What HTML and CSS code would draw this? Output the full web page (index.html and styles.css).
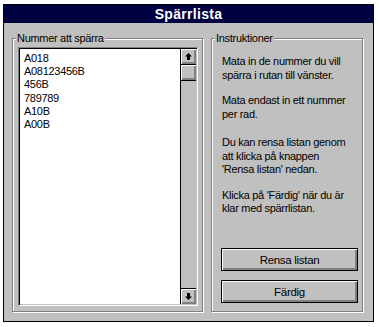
FILE: index.html
```html
<!DOCTYPE html>
<html lang="sv">
<head>
<meta charset="utf-8">
<title>Spärrlista</title>
<link rel="stylesheet" href="styles.css">
</head>
<body>
<div class="window">
  <div class="titlebar">Spärrlista</div>
  <div class="client">
    <div class="group group-list">
      <span class="legend">Nummer att spärra</span>
      <div class="listbox">
        <ul class="items">
          <li>A018</li>
          <li>A08123456B</li>
          <li>456B</li>
          <li>789789</li>
          <li>A10B</li>
          <li>A00B</li>
        </ul>
        <div class="scrollbar">
          <div class="sb-btn"><svg width="7" height="7" viewBox="0 0 7 7"><polygon points="3.5,0 7,3.5 5,3.5 5,7 2,7 2,3.5 0,3.5" fill="#000"/></svg></div>
          <div class="sb-thumb"></div>
          <div class="sb-track"></div>
          <div class="sb-btn sb-btn-down"><svg width="7" height="7" viewBox="0 0 7 7"><polygon points="3.5,7 7,3.5 5,3.5 5,0 2,0 2,3.5 0,3.5" fill="#000"/></svg></div>
        </div>
      </div>
    </div>
    <div class="group group-info">
      <span class="legend">Instruktioner</span>
      <p class="para">Mata in de nummer du vill<br>spärra i rutan till vänster.</p>
      <p class="para para-2">Mata endast in ett nummer<br>per rad.</p>
      <p class="para para-3">Du kan rensa listan genom<br>att klicka på knappen<br>'Rensa listan' nedan.</p>
      <p class="para para-4">Klicka på 'Färdig' när du är<br>klar med spärrlistan.</p>
      <div class="buttons">
        <button class="btn">Rensa listan</button>
        <button class="btn">Färdig</button>
      </div>
    </div>
  </div>
</div>
</body>
</html>
```

FILE: styles.css
```css
* { box-sizing: border-box; }

html, body {
  margin: 0;
  padding: 0;
  background: #ffffff;
}

body {
  font-family: "Liberation Sans", Arial, sans-serif;
  font-size: 11px;
  letter-spacing: -0.3px;
  color: #000;
}

.window {
  margin: 4px 0 0 3px;
  width: 371px;
  height: 318px;
  border: 1px solid #000;
  background: #c0c0c0;
  display: flex;
  flex-direction: column;
}

.titlebar {
  height: 18px;
  flex: none;
  background: #000040;
  color: #fff;
  font-weight: bold;
  font-size: 14px;
  line-height: 18px;
  text-align: center;
  letter-spacing: 0.3px;
}

.client {
  flex: 1;
  min-height: 0;
  display: flex;
  gap: 8px;
  padding: 15px 10px 9px 8px;
}

.group {
  position: relative;
  min-height: 0;
  border: 1px solid #808080;
  box-shadow: inset 1px 1px #fff, 1px 1px #fff;
  display: flex;
}

.legend {
  position: absolute;
  top: -8px;
  left: 3px;
  padding: 0 1px;
  background: #c0c0c0;
  line-height: 14px;
  white-space: nowrap;
}

.group-list {
  width: 191px;
  padding: 8px 4px 5px 5px;
}

.group-info {
  flex: 1;
  flex-direction: column;
  padding: 16px 4px 8px 9px;
}

.listbox {
  flex: 1;
  display: flex;
  background: #fff;
  border-style: solid;
  border-width: 1px;
  border-color: #808080 #fff #fff #808080;
  box-shadow: inset 1px 1px #000, inset -1px -1px #c0c0c0;
  padding: 1px;
}

.items {
  flex: 1;
  list-style: none;
  margin: 0;
  padding: 3px 0 0 4px;
  line-height: 13.2px;
}

.scrollbar {
  width: 16px;
  display: flex;
  flex-direction: column;
  border-left: 1px solid #000;
  background: #c0c0c0;
}

.sb-btn {
  height: 16px;
  display: flex;
  align-items: center;
  justify-content: center;
  background: #c0c0c0;
  border-bottom: 1px solid #000;
  box-shadow: inset 1px 1px #fff, inset -2px -2px #808080;
}

.sb-btn-down {
  border-bottom: none;
  border-top: 1px solid #000;
}

.sb-thumb {
  height: 16px;
  background: #c0c0c0;
  border-bottom: 1px solid #000;
  box-shadow: inset 1px 1px #fff, inset -2px -2px #808080;
}

.sb-track {
  flex: 1;
}

.para {
  margin: 0;
  padding-left: 1px;
  line-height: 13.5px;
  white-space: nowrap;
}

.para-2 { margin-top: 12px; }
.para-3 { margin-top: 15px; }
.para-4 { margin-top: 12px; }

.buttons {
  margin-top: auto;
  display: flex;
  flex-direction: column;
  gap: 9px;
}

.btn {
  height: 23px;
  width: 137px;
  font-family: inherit;
  font-size: 11.5px;
  letter-spacing: -0.3px;
  color: #000;
  background: #c0c0c0;
  border: 1px solid #000;
  border-radius: 0;
  box-shadow: inset 1px 1px #fff, inset -2px -2px #808080;
  padding: 0;
  margin: 0;
}
```
